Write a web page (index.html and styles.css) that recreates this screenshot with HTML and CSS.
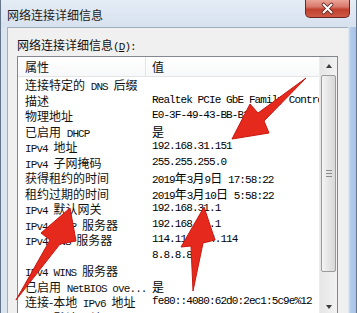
FILE: index.html
```html
<!DOCTYPE html>
<html lang="zh-CN">
<head>
    <meta charset="UTF-8">
    <title>网络连接详细信息</title>
    <link rel="stylesheet" href="styles.css">
</head>
<body>

    <div class="window">
        <div class="titlebar">
            <span class="title">网络连接详细信息</span>
            <div class="close">
                <svg width="43" height="17" viewBox="0 0 43 17">
                    <path d="M17.5 4.5 L25.5 12.5 M25.5 4.5 L17.5 12.5" stroke="#5a1d17" stroke-width="3.6" stroke-linecap="round"/>
                    <path d="M17.5 4.5 L25.5 12.5 M25.5 4.5 L17.5 12.5" stroke="#fff" stroke-width="2" stroke-linecap="round"/>
                </svg>
            </div>
        </div>

        <div class="frame">
            <div class="client">
                <div class="label">网络连接详细信息<span class="a">(<u>D</u>):</span></div>

                <div class="listbox">
                    <div class="list">
                        <div class="head">
                            <div class="k">属性</div>
                            <div class="v-head">值</div>
                        </div>
                        <div class="row"><div class="k">连接特定的<span class="a"> DNS </span>后缀</div><div class="v"></div></div>
                        <div class="row"><div class="k">描述</div><div class="v">Realtek PCIe GbE Family Controller</div></div>
                        <div class="row"><div class="k">物理地址</div><div class="v">E0-3F-49-43-BB-B2</div></div>
                        <div class="row"><div class="k">已启用<span class="a"> DHCP</span></div><div class="v"><span class="c">是</span></div></div>
                        <div class="row"><div class="k"><span class="a">IPv4 </span>地址</div><div class="v">192.168.31.151</div></div>
                        <div class="row"><div class="k"><span class="a">IPv4 </span>子网掩码</div><div class="v">255.255.255.0</div></div>
                        <div class="row"><div class="k">获得租约的时间</div><div class="v">2019<span class="c">年</span>3<span class="c">月</span>9<span class="c">日</span> 17:58:22</div></div>
                        <div class="row"><div class="k">租约过期的时间</div><div class="v">2019<span class="c">年</span>3<span class="c">月</span>10<span class="c">日</span> 5:58:22</div></div>
                        <div class="row"><div class="k"><span class="a">IPv4 </span>默认网关</div><div class="v">192.168.31.1</div></div>
                        <div class="row"><div class="k"><span class="a">IPv4 DHCP </span>服务器</div><div class="v">192.168.31.1</div></div>
                        <div class="row"><div class="k"><span class="a">IPv4 DNS </span>服务器</div><div class="v">114.114.114.114</div></div>
                        <div class="row"><div class="k"></div><div class="v">8.8.8.8</div></div>
                        <div class="row"><div class="k"><span class="a">IPv4 WINS </span>服务器</div><div class="v"></div></div>
                        <div class="row"><div class="k">已启用<span class="a"> NetBIOS ove...</span></div><div class="v"><span class="c">是</span></div></div>
                        <div class="row"><div class="k">连接-本地<span class="a"> IPv6 </span>地址</div><div class="v">fe80::4080:62d0:2ec1:5c9e%12</div></div>
                        <div class="row"><div class="k"><span class="a">IPv6 </span>默认网关</div><div class="v"></div></div>
                    </div>

                    <div class="scrollbar">
                        <div class="sb-btn"><span class="tri-up"></span></div>
                        <div class="thumb"><span class="grip"></span></div>
                        <div class="track"></div>
                        <div class="sb-btn"><span class="tri-down"></span></div>
                    </div>
                </div>
            </div>
        </div>
    </div>

    <!-- 红色标注箭头 -->
    <svg class="arrows" width="357" height="313" viewBox="0 0 357 313">
        <polygon points="306,78 264,121 269,133 232,139 250,104 258,113" />
        <polygon points="204,207 215,240 203,243 193,291 191,246 181,247" />
        <polygon points="70,208 76,241 60,244 16,300 50,240 41,233" />
    </svg>

</body>
</html>
```

FILE: styles.css
```css
body {
    margin: 0;
    width: 357px;
    height: 313px;
    overflow: hidden;
    position: relative;
    font-family: "Noto Sans CJK SC", sans-serif;
    font-size: 12px;
    color: #111;
}

.window {
    height: 313px;
    box-sizing: border-box;
    display: flex;
    flex-direction: column;
    border-left: 1px solid #66768a;
    border-right: 1px solid #66768a;
    background: linear-gradient(to right, #dbe5f0 0, #dbe5f0 348px, #b5cdea 349px, #a8c3e5 354px);
}

.titlebar {
    height: 27px;
    flex: none;
    display: flex;
    justify-content: space-between;
    align-items: flex-start;
    padding: 0 6px;
    background: linear-gradient(#e4ecf5, #d7e2ef);
}

.title {
    margin-top: 6px;
    line-height: 17px;
    color: #1b1b1b;
}

.close {
    width: 43px;
    height: 17px;
    border: 1px solid #6a2620;
    border-top: none;
    border-radius: 0 0 5px 5px;
    background: linear-gradient(#e9a497 0, #d8786a 40%, #c2402f 55%, #cd5a45 100%);
}

.close svg {
    display: block;
}

.frame {
    flex: 1;
    min-height: 0;
    padding: 0 8px 0 6px;
}

.client {
    height: 100%;
    box-sizing: border-box;
    overflow: hidden;
    background: #f0f0f0;
    border-top: 1px solid #a2aebc;
    border-left: 1px solid #a2aebc;
    padding: 10px 0 0 9px;
}

.label {
    line-height: 14px;
    height: 14px;
    margin-bottom: 4px;
    white-space: nowrap;
}

.a {
    font-family: "Liberation Mono", monospace;
    font-size: 11px;
    letter-spacing: -0.9px;
    white-space: pre;
}

.listbox {
    width: 321px;
    height: 260px;
    box-sizing: border-box;
    border: 1px solid #828790;
    background: #fff;
    display: flex;
}

.list {
    flex: 1;
    min-width: 0;
    overflow: hidden;
}

.head {
    height: 19px;
    display: flex;
    border-bottom: 1px solid #e5e5e5;
    background: linear-gradient(#ffffff, #f7f8f9);
    line-height: 20px;
}

.head .k {
    border-right: 1px solid #e2e5ea;
    box-sizing: border-box;
}

.v-head {
    padding-left: 6px;
}

.row {
    height: 15.5px;
    line-height: 15.5px;
    display: flex;
    white-space: nowrap;
}

.k {
    width: 128px;
    flex: none;
    padding-left: 7px;
    box-sizing: border-box;
    white-space: nowrap;
    overflow: hidden;
}

.v {
    padding-left: 6px;
    font-family: "Liberation Mono", monospace;
    font-size: 11px;
    letter-spacing: -0.9px;
    white-space: pre;
    color: #000;
}

.c {
    font-family: "Noto Sans CJK SC", sans-serif;
    font-size: 12px;
    letter-spacing: 0;
}

.scrollbar {
    width: 17px;
    flex: none;
    display: flex;
    flex-direction: column;
    background: linear-gradient(to right, #e6e6e6, #f2f2f2);
    border-left: 1px solid #ededed;
}

.sb-btn {
    height: 17px;
    flex: none;
    display: flex;
    align-items: center;
    justify-content: center;
}

.tri-up {
    border-left: 3px solid transparent;
    border-right: 3px solid transparent;
    border-bottom: 4px solid #3c3c3c;
}

.tri-down {
    border-left: 3px solid transparent;
    border-right: 3px solid transparent;
    border-top: 4px solid #3c3c3c;
}

.thumb {
    height: 197px;
    flex: none;
    margin: 1px 1px 0 1px;
    box-sizing: border-box;
    border: 1px solid #9b9b9b;
    border-radius: 2px;
    background: linear-gradient(to right, #f4f4f4, #e2e2e2 60%, #d8d8d8);
    display: flex;
    align-items: center;
    justify-content: center;
}

.grip {
    width: 6px;
    height: 5px;
    border-top: 1px solid #8a8a8a;
    border-bottom: 1px solid #8a8a8a;
    background: linear-gradient(transparent 2px, #8a8a8a 2px, #8a8a8a 3px, transparent 3px);
}

.track {
    flex: 1;
}

.arrows {
    position: absolute;
    left: 0;
    top: 0;
}

.arrows polygon {
    fill: #e5291d;
    stroke: #c8180f;
    stroke-width: 1;
    stroke-linejoin: round;
}
```
